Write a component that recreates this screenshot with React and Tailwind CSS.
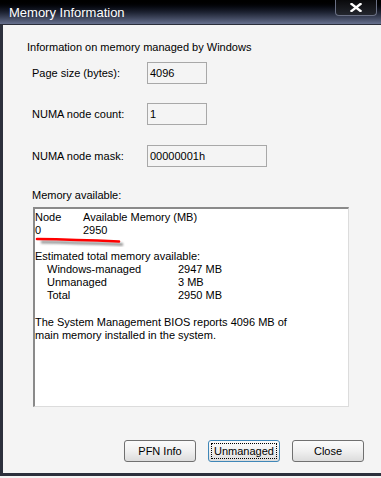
export default function App() {
  const font = { fontFamily: '"Liberation Sans", Arial, sans-serif' };
  return (
    <div className="w-[381px] h-[478px] bg-[#f4f4f4] overflow-hidden text-[11px] leading-[13px] text-black" style={font}>
      <div className="w-[381px] h-[476px] flex flex-col border-l-[3px] border-b-[3px] border-[#2c303c] bg-[#f4f4f4] relative">
        {/* title bar */}
        <div className="h-[25px] shrink-0 -ml-[3px] w-[381px] bg-gradient-to-b from-[#000000] via-[#1c2130] to-[#66708e] border-b border-[#2a2e3a] flex items-center pl-[9px] relative">
          <span className="text-white text-[13px] leading-[16px] mt-[1px]" style={font}>Memory Information</span>
          <div className="absolute right-[4px] top-0 w-[42px] h-[16px] rounded-b-[4px] border border-t-0 border-[#6a7084] bg-gradient-to-b from-[#0a0a0c] to-[#23262e] flex items-center justify-center">
            <svg width="12" height="9" viewBox="0 0 12 9">
              <path d="M1.5 1 L10.5 8 M10.5 1 L1.5 8" stroke="white" strokeWidth="2.4" strokeLinecap="square" />
            </svg>
          </div>
        </div>
        {/* content */}
        <div className="flex flex-col pl-[24px] pt-[16px] relative flex-1">
          <div>Information on memory managed by Windows</div>
          <div className="pl-[5px] flex flex-col">
            <div className="flex items-center mt-[8px]">
              <div className="w-[115px]">Page size (bytes):</div>
              <div className="w-[60px] h-[22px] border border-[#a8a8a8] flex items-center pl-[2px]">4096</div>
            </div>
            <div className="flex items-center mt-[19px]">
              <div className="w-[115px]">NUMA node count:</div>
              <div className="w-[60px] h-[22px] border border-[#a8a8a8] flex items-center pl-[2px]">1</div>
            </div>
            <div className="flex items-center mt-[20px]">
              <div className="w-[115px]">NUMA node mask:</div>
              <div className="w-[120px] h-[22px] border border-[#a8a8a8] flex items-center pl-[2px]">00000001h</div>
            </div>
            <div className="mt-[22px]">Memory available:</div>
            <div className="mt-[5px] ml-[1px] w-[316px] h-[200px] bg-white border-t-2 border-l-2 border-t-[#8a8a8a] border-l-[#8a8a8a] border-r border-b border-r-[#dcdcdc] border-b-[#dcdcdc] pt-[2px] relative">
              <div className="flex"><div className="w-[48px]">Node</div><div>Available Memory (MB)</div></div>
              <div className="flex"><div className="w-[48px]">0</div><div>2950</div></div>
              <div className="h-[13px]" />
              <div>Estimated total memory available:</div>
              <div className="flex pl-[12px]"><div className="w-[131px]">Windows-managed</div><div>2947 MB</div></div>
              <div className="flex pl-[12px]"><div className="w-[131px]">Unmanaged</div><div>3 MB</div></div>
              <div className="flex pl-[12px]"><div className="w-[131px]">Total</div><div>2950 MB</div></div>
              <div className="mt-[14px]">The System Management BIOS reports 4096 MB of</div>
              <div>main memory installed in the system.</div>
              <svg className="absolute left-[0px] top-[26px]" width="100" height="14" viewBox="0 0 100 14">
                <defs>
                  <filter id="bl" x="-10%" y="-100%" width="120%" height="300%">
                    <feGaussianBlur stdDeviation="1.2" />
                  </filter>
                </defs>
                <path d="M6 7 Q40 7.5 88 9.5" stroke="#9a9a9a" strokeWidth="3" fill="none" filter="url(#bl)" />
                <path d="M2 4 Q40 4.5 84 6.5" stroke="#ff0000" strokeWidth="2.6" fill="none" strokeLinecap="round" />
              </svg>
            </div>
          </div>
          <div className="flex mt-[33px] pl-[97px] gap-[12px]">
            <button className="w-[72px] h-[22px] rounded-[3px] border border-[#707070] bg-gradient-to-b from-[#fbfbfb] via-[#f0f0f0] to-[#dcdcdc] text-[11px] flex items-center justify-center" style={font}>PFN Info</button>
            <button className="w-[72px] h-[22px] rounded-[3px] border border-[#3f87b8] bg-gradient-to-b from-[#fbfbfb] via-[#f0f0f0] to-[#dcdcdc] text-[11px] flex items-center justify-center p-[2px]" style={font}>
              <span className="w-full h-full border border-dotted border-black flex items-center justify-center">Unmanaged</span>
            </button>
            <button className="w-[72px] h-[22px] rounded-[3px] border border-[#707070] bg-gradient-to-b from-[#fbfbfb] via-[#f0f0f0] to-[#dcdcdc] text-[11px] flex items-center justify-center" style={font}>Close</button>
          </div>
        </div>
      </div>
    </div>
  );
}
